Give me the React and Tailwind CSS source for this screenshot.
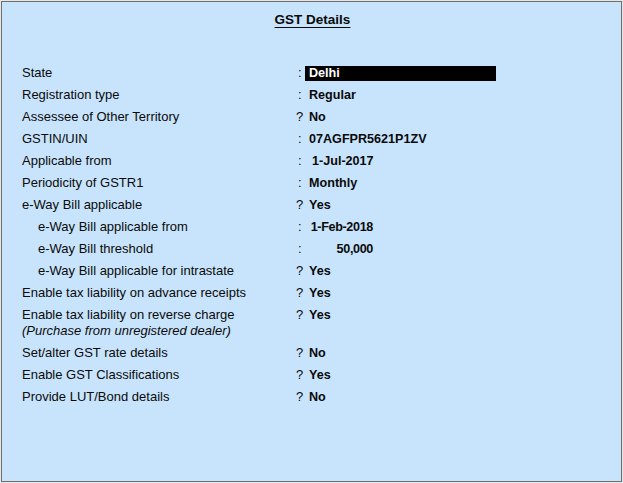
const rows = [
  { label: 'State', sep: ':', value: 'Delhi', kind: 'box' },
  { label: 'Registration type', sep: ':', value: 'Regular' },
  { label: 'Assessee of Other Territory', sep: '?', value: 'No' },
  { label: 'GSTIN/UIN', sep: ':', value: '07AGFPR5621P1ZV' },
  { label: 'Applicable from', sep: ':', value: '1-Jul-2017', kind: 'date' },
  { label: 'Periodicity of GSTR1', sep: ':', value: 'Monthly' },
  { label: 'e-Way Bill applicable', sep: '?', value: 'Yes' },
  { label: 'e-Way Bill applicable from', sep: ':', value: '1-Feb-2018', kind: 'right', indent: true },
  { label: 'e-Way Bill threshold', sep: ':', value: '50,000', kind: 'right', indent: true },
  { label: 'e-Way Bill applicable for intrastate', sep: '?', value: 'Yes', indent: true },
  { label: 'Enable tax liability on advance receipts', sep: '?', value: 'Yes' },
  { label: 'Enable tax liability on reverse charge', sep: '?', value: 'Yes', note: '(Purchase from unregistered dealer)' },
  { label: 'Set/alter GST rate details', sep: '?', value: 'No' },
  { label: 'Enable GST Classifications', sep: '?', value: 'Yes' },
  { label: 'Provide LUT/Bond details', sep: '?', value: 'No' },
];

function Row({ row }) {
  let value;
  if (row.kind === 'box') {
    value = <span className="block w-[191px] h-[15px] bg-black text-white leading-[15px] pl-[4px] -ml-[4px]">{row.value}</span>;
  } else if (row.kind === 'right') {
    value = <span className="flex justify-end w-[64px] whitespace-nowrap tracking-[-0.35px]">{row.value}</span>;
  } else if (row.kind === 'date') {
    value = <span className="pl-[3px]">{row.value}</span>;
  } else {
    value = <span>{row.value}</span>;
  }
  return (
    <div className={row.note ? 'h-[38px]' : 'h-[22px]'}>
      <div className="flex items-center h-[22px]">
        <div className={`w-[273px] shrink-0 text-[13px] ${row.indent ? 'pl-[16px]' : ''}`}>{row.label}</div>
        <div className={`w-[14px] shrink-0 text-[13px] ${row.sep === ':' ? 'pl-[3px]' : 'pl-px'}`}>{row.sep}</div>
        <div className="font-bold text-[12.6px] whitespace-nowrap">{value}</div>
      </div>
      {row.note && <div className="italic text-[13px] leading-[14px] -mt-[2px]">{row.note}</div>}
    </div>
  );
}

export default function App() {
  return (
    <div className="w-[623px] h-[483px] p-px bg-[#e6e6e6]" style={{ fontFamily: '"Liberation Sans", Arial, sans-serif' }}>
      <div className="h-full border border-[#6f6f6f] bg-[#c8e4fc] text-[#0a0a0a]">
        <div className="flex justify-center pt-[10px] pl-[2px]">
          <h1 className="font-bold text-[13.5px] underline underline-offset-[3px] leading-[16px]">GST Details</h1>
        </div>
        <div className="pl-[20px] pt-[34px]">
          {rows.map((row) => (
            <Row key={row.label} row={row} />
          ))}
        </div>
      </div>
    </div>
  );
}
